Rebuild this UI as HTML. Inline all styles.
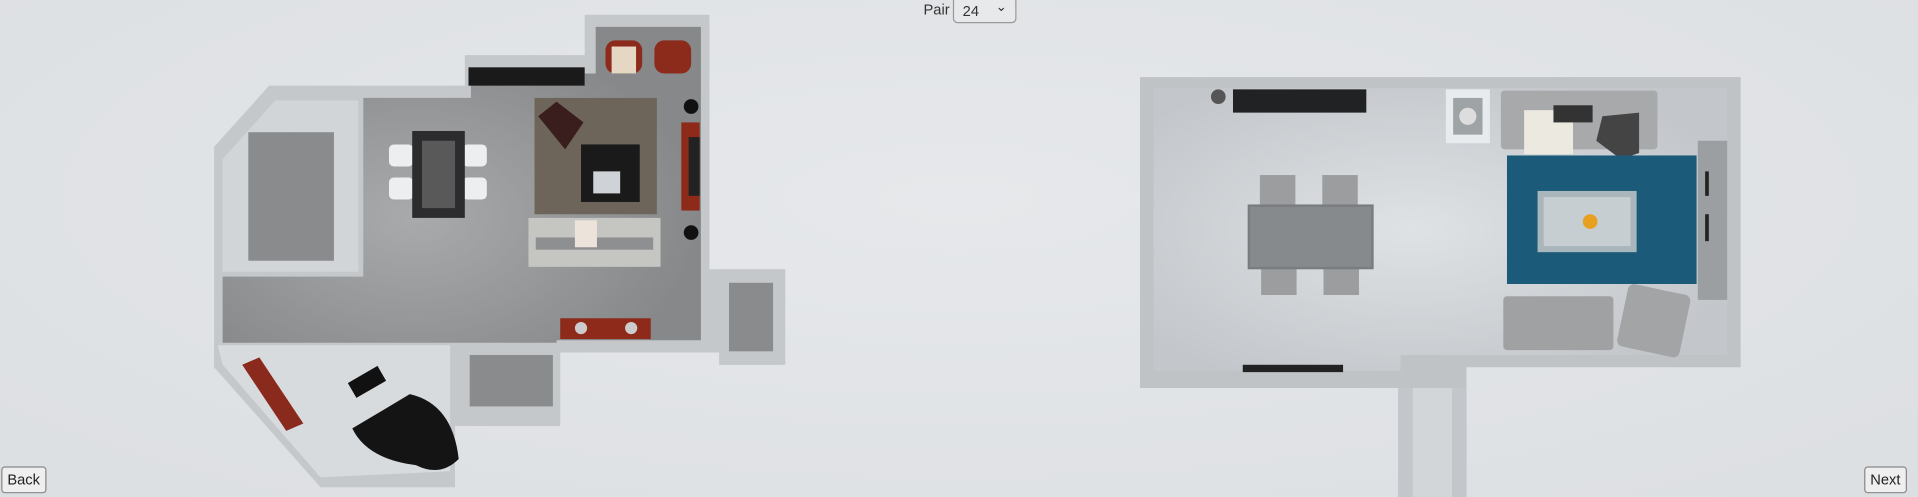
<!DOCTYPE html>
<html><head><meta charset="utf-8"><style>
html,body{margin:0;padding:0;width:1918px;height:497px;overflow:hidden;background:#dfe2e5;font-family:"Liberation Sans",sans-serif}
#s{position:absolute;left:0;top:0;width:1568px;height:406px;transform:scale(1.2232,1.2241);transform-origin:0 0;background:radial-gradient(ellipse at 50% 40%,#e6e8eb,#dcdfe2)}
.a{position:absolute}
.btn{position:absolute;border:1px solid #888;border-radius:3px;background:#efefef;font-size:12px;color:#222;padding:3px 4px;line-height:14px}
</style></head><body><div id="s">
<!-- Pair select -->
<div class="a" style="left:755px;top:1px;font-size:12px;color:#333">Pair</div>
<div class="a" style="left:779px;top:-3px;width:50px;height:20px;border:1px solid #999;border-radius:4px;background:#e8e9eb;font-size:12px;color:#333"><span style="position:absolute;left:7px;top:4px">24</span><span style="position:absolute;left:34px;top:1px;font-size:11px">&#8964;</span></div>

<!-- LEFT PLAN -->
<svg class="a" style="left:0;top:0" width="700" height="406">
 <defs><radialGradient id="fl" cx="0.4" cy="0.6" r="0.6"><stop offset="0" stop-color="#a8aaac"/><stop offset="1" stop-color="#86888a"/></radialGradient></defs>
 <!-- outer walls -->
 <polygon fill="#c5c8cb" points="220,70 380,70 380,45 478,45 478,12 580,12 580,220 642,220 642,298 588,298 588,288 458,288 458,348 372,348 372,398 262,398 175,300 175,120" />
 <!-- main floor -->
 <polygon fill="url(#fl)" points="297,80 385,80 385,70 478,70 478,60 487,60 487,22 573,22 573,278 455,278 455,280 182,280 182,226 297,226"/>
 <!-- left room -->
 <polygon fill="#d2d5d8" points="225,82 293,82 293,222 182,222 182,130"/>
 <rect x="203" y="108" width="70" height="105" fill="#898b8d"/>
 <polygon fill="#898b8d" points="203,150 240,108 240,150"/>
 <!-- piano room -->
 <polygon fill="#d8dbde" points="178,282 368,282 368,385 262,390 182,298"/>
 <polygon fill="#8a2a1c" points="198,298 212,292 248,346 234,352"/>
 <rect x="286" y="305" width="28" height="14" fill="#111" transform="rotate(-30 300 312)"/>
 <path d="M288,350 L335,322 Q370,330 375,375 Q360,390 340,380 Q300,375 288,350Z" fill="#141414"/>
 <!-- bottom middle room -->
 <rect x="384" y="290" width="68" height="42" fill="#898b8d"/>
 <!-- right small room -->
 <rect x="588" y="220" width="52" height="78" fill="#c5c8cb"/>
 <rect x="596" y="231" width="36" height="56" fill="#898b8d"/>
 <!-- tv bench -->
 <rect x="383" y="55" width="95" height="15" fill="#1a1a1a"/>
 <!-- chairs top room -->
 <rect x="495" y="33" width="30" height="27" rx="8" fill="#8c2a1c"/>
 <rect x="500" y="38" width="20" height="22" fill="#e6d6c4"/>
 <rect x="535" y="33" width="30" height="27" rx="8" fill="#8c2a1c"/>
 <!-- rug -->
 <rect x="437" y="80" width="100" height="95" fill="#6d6559"/>
 <path d="M440,95 L455,83 L477,100 L462,122Z" fill="#3a1e1e"/>
 <rect x="475" y="118" width="48" height="47" fill="#1a1a1a"/>
 <rect x="485" y="140" width="22" height="18" fill="#cfd2d6"/>
 <!-- sofa -->
 <rect x="432" y="178" width="108" height="40" fill="#c5c5c2"/>
 <rect x="438" y="194" width="96" height="10" fill="#8e8f90"/>
 <rect x="470" y="180" width="18" height="22" fill="#ece4da"/>
 <!-- dining table -->
 <rect x="318" y="118" width="20" height="18" rx="4" fill="#eceef0"/>
 <rect x="318" y="145" width="20" height="18" rx="4" fill="#eceef0"/>
 <rect x="378" y="118" width="20" height="18" rx="4" fill="#eceef0"/>
 <rect x="378" y="145" width="20" height="18" rx="4" fill="#eceef0"/>
 <rect x="337" y="107" width="43" height="71" fill="#2c2c2e"/>
 <rect x="345" y="115" width="27" height="55" fill="#6c6c6c" opacity=".7"/>
 <!-- tv cabinet / speakers -->
 <rect x="557" y="100" width="15" height="72" fill="#8e2a1a"/>
 <rect x="563" y="112" width="9" height="48" fill="#222"/>
 <circle cx="565" cy="87" r="6" fill="#111"/>
 <circle cx="565" cy="190" r="6" fill="#111"/>
 <!-- bottom cabinet -->
 <rect x="458" y="260" width="74" height="17" fill="#8e2a1a"/>
 <circle cx="475" cy="268" r="5" fill="#ccc"/><circle cx="516" cy="268" r="5" fill="#ccc"/>
</svg>

<!-- RIGHT PLAN -->
<svg class="a" style="left:900px;top:0" width="668" height="406">
 <defs><radialGradient id="f2" cx="0.45" cy="0.5" r="0.6"><stop offset="0" stop-color="#dfe2e5"/><stop offset="1" stop-color="#c3c6ca"/></radialGradient></defs>
 <!-- corridor -->
 <rect x="243" y="290" width="56" height="116" fill="#c3c6ca"/>
 <rect x="255" y="300" width="32" height="106" fill="#d3d6d9"/>
 <!-- outer walls -->
 <polygon fill="#c0c3c6" points="32,63 523,63 523,300 298,300 298,317 32,317"/>
 <polygon fill="url(#f2)" points="43,72 512,72 512,290 245,290 245,303 43,303"/>
 <!-- tv bench -->
 <rect x="108" y="73" width="109" height="19" fill="#202224"/>
 <circle cx="96" cy="79" r="6" fill="#555"/>
 <!-- side table -->
 <rect x="282" y="73" width="36" height="44" fill="#e8ebee"/>
 <rect x="288" y="80" width="24" height="30" fill="#9ea3a6"/>
 <circle cx="300" cy="95" r="7" fill="#ddd"/>
 <!-- sofa top -->
 <rect x="327" y="74" width="128" height="48" rx="3" fill="#a7a9ab"/>
 <rect x="346" y="90" width="40" height="36" fill="#ece9e0"/>
 <rect x="370" y="86" width="32" height="14" fill="#333"/>
 <polygon points="410,95 440,92 440,125 425,130 405,115" fill="#444"/>
 <!-- rug -->
 <rect x="332" y="127" width="155" height="105" fill="#1b5a78"/>
 <rect x="357" y="156" width="81" height="50" fill="#a9b6bc"/>
 <rect x="362" y="161" width="71" height="40" fill="#c6ced2"/>
 <circle cx="400" cy="181" r="6" fill="#e8a020"/>
 <!-- right cabinet -->
 <rect x="488" y="115" width="24" height="130" fill="#9c9fa1"/>
 <rect x="494" y="140" width="3" height="20" fill="#222"/><rect x="494" y="175" width="3" height="22" fill="#222"/>
 <!-- dining -->
 <rect x="130" y="143" width="29" height="25" fill="#9b9d9f"/>
 <rect x="181" y="143" width="29" height="25" fill="#9b9d9f"/>
 <rect x="131" y="218" width="29" height="23" fill="#9b9d9f"/>
 <rect x="182" y="218" width="29" height="23" fill="#9b9d9f"/>
 <rect x="120" y="167" width="103" height="53" fill="#7a7d80"/>
 <rect x="122" y="169" width="99" height="49" fill="#868a8d"/>
 <!-- bottom sofa & ottoman -->
 <rect x="329" y="242" width="90" height="44" rx="3" fill="#9fa1a3"/>
 <rect x="426" y="236" width="52" height="52" rx="5" fill="#a2a4a6" transform="rotate(12 452 262)"/>
 <!-- bottom cabinet -->
 <rect x="116" y="298" width="82" height="6" fill="#222"/>
</svg>

<div class="btn" style="left:1px;top:381px">Back</div>
<div class="btn" style="left:1524px;top:381px">Next</div>
</div></body></html>
